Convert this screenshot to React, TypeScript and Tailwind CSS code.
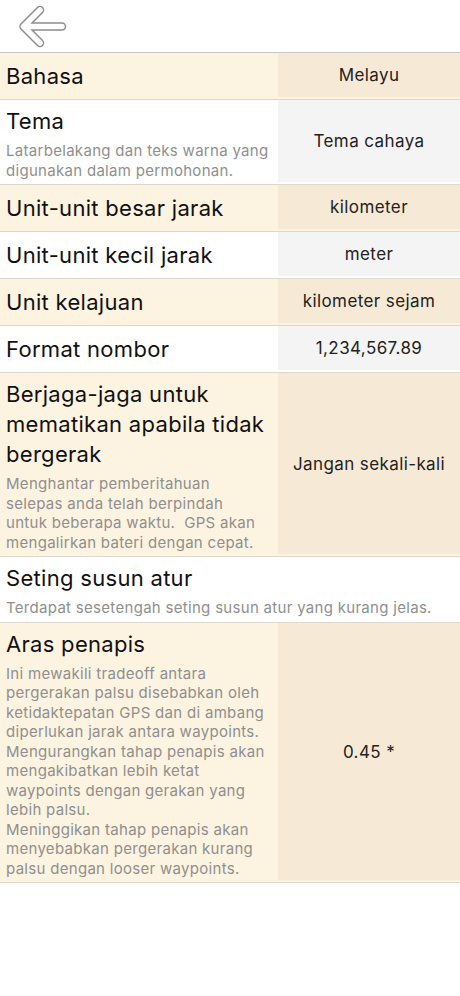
import React from "react";

type Row = {
  title: string;
  desc?: string;
  value?: string;
  tone: "cream" | "white";
};

const rows: Row[] = [
  { title: "Bahasa", value: "Melayu", tone: "cream" },
  {
    title: "Tema",
    desc: "Latarbelakang dan teks warna yang\ndigunakan dalam permohonan.",
    value: "Tema cahaya",
    tone: "white",
  },
  { title: "Unit-unit besar jarak", value: "kilometer", tone: "cream" },
  { title: "Unit-unit kecil jarak", value: "meter", tone: "white" },
  { title: "Unit kelajuan", value: "kilometer sejam", tone: "cream" },
  { title: "Format nombor", value: "1,234,567.89", tone: "white" },
  {
    title: "Berjaga-jaga untuk\nmematikan apabila tidak\nbergerak",
    desc: "Menghantar pemberitahuan\nselepas anda telah berpindah\nuntuk beberapa waktu.  GPS akan\nmengalirkan bateri dengan cepat.",
    value: "Jangan sekali-kali",
    tone: "cream",
  },
  {
    title: "Seting susun atur",
    desc: "Terdapat sesetengah seting susun atur yang kurang jelas.",
    tone: "white",
  },
  {
    title: "Aras penapis",
    desc: "Ini mewakili tradeoff antara\npergerakan palsu disebabkan oleh\nketidaktepatan GPS dan di ambang\ndiperlukan jarak antara waypoints.\nMengurangkan tahap penapis akan\nmengakibatkan lebih ketat\nwaypoints dengan gerakan yang\nlebih palsu.\nMeninggikan tahap penapis akan\nmenyebabkan pergerakan kurang\npalsu dengan looser waypoints.",
    value: "0.45 *",
    tone: "cream",
  },
];

function BackArrow() {
  const d = "M62 26.5 H24 M40 10 L23.5 26.5 L40 43";
  return (
    <svg width="72" height="52" viewBox="0 0 72 52" className="block">
      <path d={d} fill="none" stroke="#8c8c8c" strokeWidth="8.5" strokeLinecap="round" strokeLinejoin="round" />
      <path d={d} fill="none" stroke="#ffffff" strokeWidth="5.6" strokeLinecap="round" strokeLinejoin="round" />
    </svg>
  );
}

export default function App() {
  return (
    <div
      className="w-[460px] min-h-[996px] bg-white text-black"
      style={{ fontFamily: "Inter, 'Noto Sans', sans-serif" }}
    >
      <div className="h-[53px] border-b border-[#c9c7c4] flex items-start">
        <BackArrow />
      </div>
      {rows.map((r, i) => {
        const cream = r.tone === "cream";
        const multi = !!r.desc;
        return (
          <div
            key={i}
            className={`flex min-h-[47px] border-b border-[#dcd7cf] ${cream ? "bg-[#fdf3e1]" : "bg-white"}`}
          >
            <div
              className={`flex-1 min-w-0 flex flex-col justify-center pl-[6px] pr-0 ${multi ? "pt-[6px] pb-[4px]" : ""}`}
            >
              <div className="text-[22px] leading-[30px] tracking-[0.3px] text-[#111] whitespace-pre-line">
                {r.title}
              </div>
              {r.desc && (
                <div className="mt-[5px] text-[15px] leading-[19.5px] text-[#8f8f8f] whitespace-pre-wrap tracking-[0.3px]">
                  {r.desc}
                </div>
              )}
            </div>
            {r.value && (
              <div
                className={`w-[182px] shrink-0 mb-[2px] flex items-center justify-center pt-[2px] text-[17px] tracking-[0.4px] text-[#222] ${cream ? "bg-[#f6ead6]" : "bg-[#f4f4f4]"}`}
              >
                {r.value}
              </div>
            )}
          </div>
        );
      })}
    </div>
  );
}
